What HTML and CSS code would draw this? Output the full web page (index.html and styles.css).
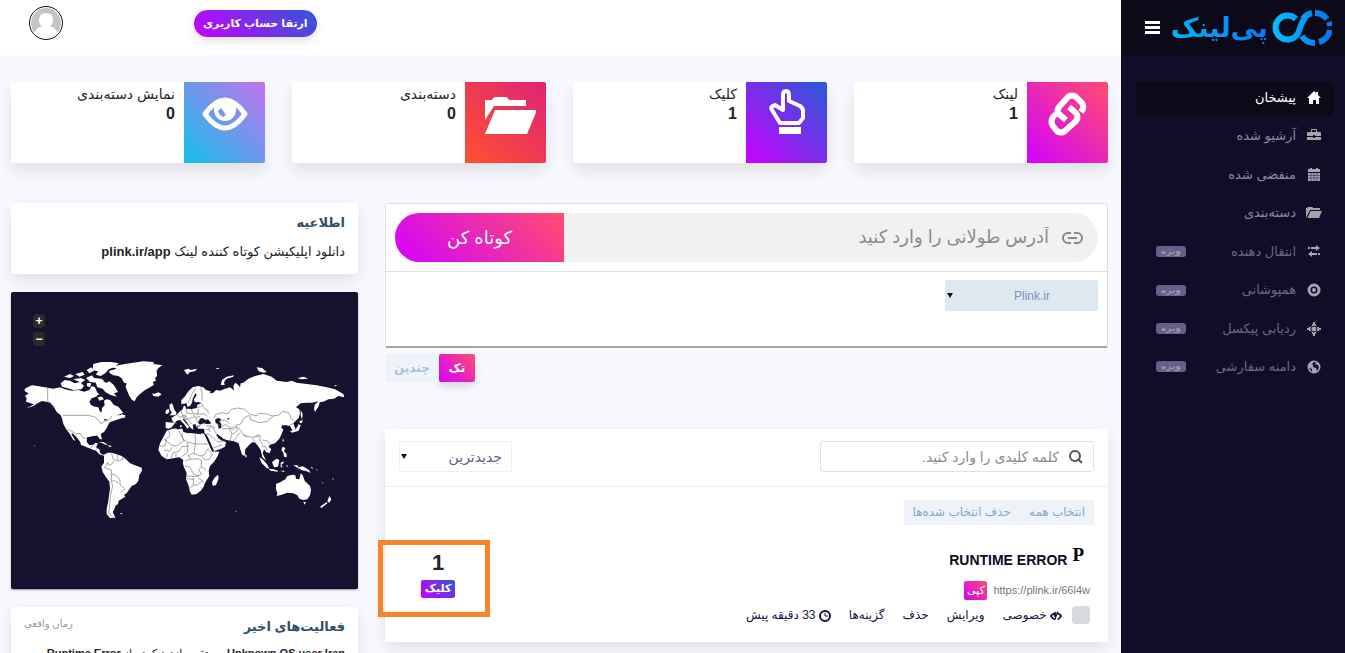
FILE: index.html
```
<!DOCTYPE html>
<html lang="fa" dir="rtl">
<head>
    <meta charset="UTF-8">
    <meta name="viewport" content="width=device-width, initial-scale=1.0">
    <title>پی‌لینک - پیشخان</title>
    <link rel="stylesheet" href="styles.css">
</head>
<body>
    <aside class="sidebar">
        <div class="brand">
            <a href="#" class="logo">
                <svg class="logo-mark" viewBox="0 0 60 36" aria-hidden="true">
                    <defs>
                        <linearGradient id="ring" x1="0" x2="60" y1="0" y2="0" gradientUnits="userSpaceOnUse">
                            <stop offset="0" stop-color="#00c3fb"/>
                            <stop offset="1" stop-color="#0a72ee"/>
                        </linearGradient>
                    </defs>
                    <g fill="none" stroke="url(#ring)" stroke-width="6">
                        <path d="M31 9A15 15 0 0 1 40 3M43 3A15 15 0 0 1 55 9M57 12A15 15 0 0 1 58 16M58 20A15 15 0 0 1 47 32M43 33A15 15 0 0 1 30 26"/>
                        <path d="M24 9A12 12 0 1 0 25 25Q27 22 28 18T33 8"/>
                    </g>
                </svg>
                <span class="logo-text">پی‌لینک</span>
            </a>
            <button class="menu-btn" aria-label="منو">
                <svg viewBox="0 0 15 13"><path d="M0 0h15v3H0zM0 5h15v3H0zM0 10h15v3H0z"/></svg>
            </button>
        </div>
        <ul class="menu">
            <li><a href="#" class="active">
                <svg viewBox="0 0 16 16"><path d="M8 1 1 8h2v6h4v-4h3v4h3V8h2L12 5V2h-2v1z"/></svg>
                <span>پیشخان</span></a></li>
            <li><a href="#">
                <svg viewBox="0 0 16 16"><path d="M5 4V2q0-1 1-1h4q1 0 1 1v2h3q1 0 1 1v3H9V7H7v1H1V5q0-1 1-1zM6 4h4V2H6zM1 9h6v1h2V9h6v3H1z"/></svg>
                <span>آرشیو شده</span></a></li>
            <li><a href="#">
                <svg viewBox="0 0 16 16"><path d="M2 2h2V1h2v1h4V1h2v1h2v3H2zM2 6h12v8H2z"/><path class="cut" d="M2 8.500h12M2 11h12M5 6v8M8 6v8M11 6v8"/></svg>
                <span>منفضی شده</span></a></li>
            <li><a href="#">
                <svg viewBox="0 0 16 16"><path d="M0 13V3h1q0-1 1-1h4q1 0 1 1h7v2H4zM4.500 6H16l-3 7H1.500z"/></svg>
                <span>دسته‌بندی</span></a></li>
            <li class="dim"><a href="#">
                <svg viewBox="0 0 16 16"><path d="M2 3h2v2H2zM5 3h5V1l4 3-4 3V5H5zM12 9h2v2h-2zM6 9h5v2H6v2L2 10l4-3z"/></svg>
                <span>انتقال دهنده</span><b>ویژه</b></a></li>
            <li class="dim"><a href="#">
                <svg viewBox="0 0 16 16"><circle cx="8" cy="8" r="5" class="line"/><circle cx="8" cy="8" r="2"/></svg>
                <span>همپوشانی</span><b>ویژه</b></a></li>
            <li class="dim"><a href="#">
                <svg viewBox="0 0 16 16"><path d="M7 1h2v2h1v2h1v1h2v1h2v2h-2v1h-2v1h-1v2H9v2H7v-2H6v-2H5v-1H3V9H1V7h2V6h2V5h1V3h1z"/><circle cx="8" cy="8" r="3" class="ring"/></svg>
                <span>ردیابی پیکسل</span><b>ویژه</b></a></li>
            <li class="dim"><a href="#">
                <svg viewBox="0 0 16 16"><circle cx="8" cy="8" r="6.500"/><path class="hole" d="M8 3l2 0-1 2 3 1 1 3-2 3-1-3-3-1V6L6 5zM3 9l3 1v3z"/></svg>
                <span>دامنه سفارشی</span><b>ویژه</b></a></li>
        </ul>
    </aside>

    <div class="page">
        <header class="topbar">
            <a href="#" class="upgrade">ارتقا حساب کاربری</a>
            <a href="#" class="avatar" aria-label="حساب کاربری">
                <svg viewBox="0 0 30 30">
                    <clipPath id="face"><circle cx="15" cy="15" r="15"/></clipPath>
                    <g clip-path="url(#face)">
                        <path fill="#c5c5c5" d="M0 0h30v30H0z"/>
                        <path fill="#fff" d="M15 5q7 0 7 7 0 4-3 6 6 2 8 8v5H3v-5q2-6 8-8-3-2-3-6 0-7 7-7z"/>
                    </g>
                </svg>
            </a>
        </header>

        <main class="content">
            <section class="stats">
                <div class="stat">
                    <div class="tile pink">
                        <svg viewBox="0 0 60 60"><g fill="none" stroke="#fff" stroke-width="6">
                            <path d="M43 30q4-5 1-9l-6-6q-4-3-8 0L21 25q-3 4 0 7l7 6"/>
                            <path d="M31 25l7 6q3 4 0 8l-11 10q-4 3-8 0l-4-5q-3-4 0-9l3-3"/>
                        </g></svg>
                    </div>
                    <div class="stat-text"><p>لینک</p><strong>1</strong></div>
                </div>
                <div class="stat">
                    <div class="tile violet">
                        <svg viewBox="0 0 60 60">
                            <path fill="none" stroke="#fff" stroke-width="4" stroke-linejoin="round" d="M26 28V13q0-4 3-4t3 4v6l11 5q3 2 3 5v7l-4 5H23l-8-13q-2-3 1-4l2-1z"/>
                            <path fill="#fff" d="M22 45h22v7H22z"/>
                        </svg>
                    </div>
                    <div class="stat-text"><p>کلیک</p><strong>1</strong></div>
                </div>
                <div class="stat">
                    <div class="tile red">
                        <svg viewBox="0 0 60 60"><path fill="#fff" d="M9 38V18h7q1-3 4-3h9q3 0 4 3h17v6H18zM19 28h42L51 52H9z"/></svg>
                    </div>
                    <div class="stat-text"><p>دسته‌بندی</p><strong>0</strong></div>
                </div>
                <div class="stat">
                    <div class="tile blue">
                        <svg viewBox="0 0 60 60">
                            <path fill="none" stroke="#fff" stroke-width="5" stroke-linejoin="round" d="M10 32Q20 18 30 18t20 14Q40 46 30 46T10 32z"/>
                            <circle cx="30" cy="28" r="11" fill="#fff"/>
                            <path fill="#7599ec" d="M23 29l3-3 5 7-3 2q-4-2-5-6z"/>
                        </svg>
                    </div>
                    <div class="stat-text"><p>نمایش دسته‌بندی</p><strong>0</strong></div>
                </div>
            </section>

            <div class="columns">
                <div class="main-col">
                    <form class="shorten">
                        <div class="url-row">
                            <label class="url-field">
                                <svg viewBox="0 0 23 14" fill="none" stroke="#888" stroke-width="2"><path d="M10 2H7a5 5 0 0 0 0 10h3M13 2h3a5 5 0 0 1 0 10h-3M7 7h9"/></svg>
                                <input type="text" placeholder="آدرس طولانی را وارد کنید" aria-label="آدرس طولانی">
                            </label>
                            <button type="button" class="short-btn">کوتاه کن</button>
                        </div>
                        <div class="domain-row">
                            <span class="pick domain">
                                <select aria-label="دامنه"><option>Plink.ir</option></select>
                            </span>
                        </div>
                    </form>
                    <div class="mode">
                        <button class="on">تک</button>
                        <button>چندین</button>
                    </div>

                    <section class="links">
                        <div class="links-head">
                            <label class="search">
                                <svg viewBox="0 0 14 14" fill="none" stroke="#555" stroke-width="2"><circle cx="6" cy="6" r="5"/><path d="M9 9l4 4"/></svg>
                                <input type="text" placeholder="کلمه کلیدی را وارد کنید." aria-label="جستجو">
                            </label>
                            <span class="pick order">
                                <select aria-label="ترتیب"><option>جدیدترین</option></select>
                            </span>
                        </div>
                        <div class="bulk">
                            <a href="#">انتخاب همه</a>
                            <a href="#">حذف انتخاب شده‌ها</a>
                        </div>
                        <div class="link-item">
                            <div class="link-info">
                                <h3><span class="fav">P</span><a href="#">RUNTIME ERROR</a></h3>
                                <div class="short-url">
                                    <a href="#">https://plink.ir/66l4w</a>
                                    <button class="copy">کپی</button>
                                </div>
                                <div class="actions">
                                    <input type="checkbox" aria-label="انتخاب لینک">
                                    <a href="#">
                                        <svg viewBox="0 0 14 12"><path d="M7 2Q3 3 1 6q2 3 5 4M9 3q3 1 4 3-2 3-4 4" fill="none" stroke="#1a1440" stroke-width="2"/><path d="M8 1h2L6 11H5zM7 3v5Q3 6 5 3z" fill="#1a1440"/></svg>
                                        خصوصی</a>
                                    <a href="#">ویرایش</a>
                                    <a href="#">حذف</a>
                                    <a href="#">گزینه‌ها</a>
                                    <span>
                                        <svg viewBox="0 0 12 12" fill="none" stroke="#1a1440" stroke-width="2"><circle cx="6" cy="6" r="5"/><path d="M6 3v3h3" stroke-width="1"/></svg>
                                        33 دقیقه پیش</span>
                                </div>
                            </div>
                            <div class="clicks">
                                <strong>1</strong>
                                <span>کلیک</span>
                            </div>
                        </div>
                    </section>
                </div>

                <div class="side-col">
                    <section class="card notice">
                        <h2>اطلاعیه</h2>
                        <p>دانلود اپلیکیشن کوتاه کننده لینک <b>plink.ir/app</b></p>
                    </section>

                    <section class="map">
                        <div class="zoom">
                            <button aria-label="بزرگ‌نمایی">+</button>
                            <button aria-label="کوچک‌نمایی">−</button>
                        </div>
                        <svg viewBox="3 -174 1041 891" role="img" aria-label="نقشه جهان">
                            <g class="land">
                                <!-- north america -->
                                <path d="M43 118L55 110 66 106 82 108 113 113 130 116 150 112 165 118 185 122 205 120 222 125 238 120 245 108 255 112 262 128 268 132 258 140 245 145 238 155 243 165 255 170 265 172 270 185 275 186 276 174 284 166 282 152 290 148 300 150 312 165 325 170 340 188 330 193 318 196 335 195 347 200 340 203 325 208 312 212 300 216 296 222 292 230 288 238 282 246 272 252 276 268 270 268 262 257 250 258 240 260 231 262 230 275 238 286 250 284 257 278 264 280 258 292 268 298 270 308 278 314 286 312 280 317 268 313 258 302 245 298 230 292 213 284 210 275 200 262 188 250 184 252 196 272 190 270 178 250 170 240 160 222 156 205 152 196 140 186 130 168 120 158 112 156 96 153 85 158 70 168 50 175 72 163 62 160 48 155 50 145 45 138 56 130 46 125z"/>
                                <!-- arctic islands -->
                                <path d="M152 100l12-10 16 2 14 8 16-4 12 12-8 10-24 2-20-6-14-4zM162 80l18-8 12 6-12 6zM196 72l22-6 6 8-16 6zM190 88l22-4 14 6-12 8zM230 60l14-8 8 10-14 8zM228 84l18-8 6 8 22 2 10 8-24 4-20-2zM250 42l24-6 30 0 22 4-10 10-20 8-10 12-14 8-14-4 6-10-16-4zM256 96l20-2 14 4 8-4 14 12 12 20-12 4 8 10-20-6-14-8-8-10-16-4zM262 140l14 0 6 8-14 4zM232 98l12 2-4 12-10-4z"/>
                                <!-- greenland, iceland -->
                                <path d="M298 62L320 56 308 52 325 46 345 42 370 38 400 34 430 36 432 42 457 46 445 54 440 62 441 78 435 84 438 92 428 96 432 104 420 112 405 120 390 132 380 142 374 154 366 150 358 138 352 124 347 110 350 100 342 98 335 85 325 78 310 76 298 68zM426 130l6 2 13-5 10 6-10 7-15-2z"/>
                                <!-- caribbean -->
                                <path d="M266 276l14 0 14 8-8 0-10-5zM292 286l14 2-6 4zM72 286l3 0-1 3zM330 490l8-1-4 4zM334 192l12 4-2 8-8-2z"/>
                                <!-- south america -->
                                <path d="M282 316L292 308 305 308 320 313 335 318 348 328 360 340 375 346 395 353 396 362 388 374 385 392 378 402 365 408 358 418 350 430 342 434 346 440 335 447 326 452 324 462 316 468 313 478 308 486 312 494 316 503 300 504 290 492 290 476 294 458 297 438 300 415 298 395 288 382 278 366 274 350 282 338z"/>
                                <!-- africa -->
                                <path d="M470 242L488 236 516 234 520 246 535 250 552 246 575 250 583 252 590 268 600 290 606 304 628 305 622 320 612 335 600 348 596 362 598 378 590 390 585 400 580 412 572 422 560 432 545 434 540 425 535 405 528 388 530 370 522 352 518 338 520 330 508 322 490 325 470 328 455 318 445 300 450 280 460 262zM624 374l2 11-8 20-10 3-2-13 9-13z"/>
                                <!-- europe and asia -->
                                <path d="M467 216L490 218 484 204 500 194 510 184 518 178 521 168 526 168 528 176 545 177 560 174 562 164 575 159 566 156 554 157 552 148 560 135 556 130 548 146 546 158 540 168 532 170 530 160 514 163 514 150 524 140 535 124 548 112 565 108 580 112 588 120 602 124 600 130 592 132 610 128 618 120 630 122 645 116 660 112 668 118 672 122 670 108 676 98 684 104 690 112 692 100 700 98 715 86 735 78 760 72 785 80 800 92 830 96 845 92 860 98 890 102 920 106 950 112 975 118 1000 132 1003 142 985 138 972 146 955 148 940 155 930 156 925 170 915 186 912 178 914 165 925 154 905 158 890 158 872 160 858 172 868 178 870 190 866 204 856 214 850 220 856 236 848 242 840 228 828 226 816 226 814 234 820 238 816 250 808 266 795 280 780 284 776 290 784 298 778 310 768 306 762 298 758 310 768 332 757 322 752 300 744 288 736 278 728 276 718 284 706 298 704 318 696 314 690 295 686 280 672 274 650 270 640 266 622 254 624 264 636 272 648 276 645 290 630 298 610 304 600 285 592 262 584 250 582 236 565 236 558 228 556 222 548 224 550 240 540 232 530 216 522 206 518 208 530 222 538 230 532 236 522 222 510 210 500 212 494 220 486 232 476 236 467 234z"/>
                                <path d="M478 164l8-4 4 8 2 10 8 10-4 8-18 0 8-8-6-8zM468 180l8-4 2 10-6 6-6-2zM510 226l5 0 0 8-5-2z"/>
                                <!-- northern islands -->
                                <path d="M522 60l14-4 6 4 20-4-8 8-14 2-8 8-6-8zM616 54l12 0-4 4zM632 104l4-14 14-10 22-4-2 4-20 6-8 10 2 10zM740 52l16 2 14 12-10 2-14-4zM862 84l20-4 12 6-20 2zM974 105l8 2-8 2z"/>
                                <!-- japan, philippines, indonesia -->
                                <path d="M872 180l6 12-2 18-4-14zM868 214l10-4-2 8-6 2zM866 222l6 4-6 16-20 6-6-4 16-6 6-8zM818 266l4 4-4 8zM818 290l8 4-4 10 8 8 0 10-8-2-2-12-6-8zM748 322l10 6 14 16 6 12-8-2-16-16zM776 356l14 2 14 4-2 3-20-3zM786 336l14-10 8 4-4 20-12 2zM812 338l10-4-2 6-6 4 4 8-6 0zM830 344l4 4-4 4zM810 362l14 0-2 4zM850 346l12 0 4 6 12-3 18 10 6 10-14-6-12-2-14-8zM705 312l6 6-4 6z"/>
                                <!-- oceania -->
                                <path d="M798 402L812 396 826 388 832 378 848 374 856 376 858 386 868 388 872 370 878 376 884 392 900 408 903 420 900 436 892 448 880 450 868 446 862 436 850 430 832 428 815 434 800 438 802 430 798 418zM880 456l8 0-4 8zM958 438l6 10-6 10-6-4zM950 456l2 4-18 14-4-4zM902 350l8 4-4 2zM935 396l6 4-4 0zM967 385l5 2-4 2zM918 356l6 6-5-2zM676 482l4 2-4 1z"/>
                            </g>
                            <g class="water">
                                <path d="M564 218l6-12 8-2 8 6 8-2 10 12-10 3-14-3-10 4zM616 208l10-4 8 4-6 6 6 8 0 12-8 2-2-12-8-8zM260 134l10 4-4 5zM560 228l14-2-12 5zM282 206l12 4-10 2zM650 206l8-2-2 5z"/>
                                <path class="sea" d="M586 252l8 16 8 18 8 18M500 236l20-4 14 14 40 4M620 254l16 12"/>
                            </g>
                            <g class="borders">
                                <path d="M113 112v43l8 3 10 15M158 196h78l18 5 12 10 6 10 14-8 12-4 8-12M170 240l12 2 16 10 12-2 8 12 12 4M240 296l8-10M256 300l8-6"/>
                                <path d="M305 310l4 16 16 8 14-8M288 338l14 8 10-14M282 352l10 4 12 4 0 12 14 4 12 14 0 14 14 12-12 12M304 372l0 22 10-2 12 8M304 394l4 14-6 26-4 40-2 16 14 12M322 314l2 16M338 320l0 10M286 350l10-12"/>
                                <path d="M476 242l4 16-18 12M462 268l22 18 16 2 22-16-16-30M450 288l14 0 6-20M462 300l16 4 8-12M470 326l2-16M484 324l4-16 18-4M498 322l0-12M506 304l10-14 20-2M515 248l4 20 14 10 0 28-18 14M534 276l22 6v-34M556 282l38 0M556 282l-4 28-18 6M552 310l18 8 14-4 10-18M594 298l14 14-10 16-14 2-10-12M534 316l8 12-16 4M542 328l20-2 12 4 0 20-8 10 8 12M524 348l16 4 12 22 16 2M574 350l14 10M530 378l26 2 12-2 8-8M530 386l20 2M550 384v22l-14 10M550 404l12 2 14-14 8 8M564 384l14 8M572 412l6 4"/>
                                <path d="M484 216l16 5M500 194l10 8 12-6M513 180l4 16 14 4M528 176l2 12 16 4M544 177l4 12 14 4 4-16M560 174l14-6M532 192l-14 10 20 4 14-6M548 190l8 12 14-2M556 202l8 16M575 160l8 16 10 4 2 12M562 192l22 0 8 8M534 160l8-20 14-26M572 112l4 20 0 20M522 206l14 4 10 12M588 228l18 0 10 6M586 240l12-4 6-8M596 236l4 10M606 230l8 12 6 12M590 250l12 6 20 20M622 276l22-4M610 294l16-6 12-4"/>
                                <path d="M612 204l4-10 20-6 18 4 10-14 18-4 22 4 14 14 20 6 10-8 22 2 16 6 20-2 12-12 18 4 8 18 8 8M716 196l-16 10-8 16-16 4M616 218l18 10 12-4 16 10 14-4 8 12M626 214l18-4 14 10M718 196l4 14 28 8 22-4 18-16M636 236l22 0 8 16-6 18M658 236l16 2M666 254l16-12M676 228l14 10 10 16 16 6 14 2 16-8M672 272l10-14 8-10M700 254l12 8M726 264l10 12M736 262l14-6 0 14 8 14M758 270l16 4 8 12M756 288l10 2 6 12M866 346v16M838 226l12-6"/>
                            </g>
                        </svg>
                    </section>

                    <section class="card activity">
                        <div class="activity-head">
                            <h2>فعالیت‌های اخیر</h2>
                            <small>زمان واقعی</small>
                        </div>
                        <p><b>Unknown OS user Iran</b> مستقیم بازدید کرده از <b>Runtime Error</b></p>
                    </section>
                </div>
            </div>
        </main>
    </div>
</body>
</html>
```
FILE: styles.css
```
* {
    box-sizing: border-box;
}
body {
    display: flex;
    height: 100vh;
    margin: 0;
    overflow: hidden;
    background-color: #f8f9fe;
    color: #212529;
    font-family: "Liberation Sans", "DejaVu Sans", sans-serif;
    font-size: 13px;
    line-height: 20px;
}
h2, h3, p, ul {
    margin: 0;
    padding: 0;
}
a {
    color: inherit;
    text-decoration: none;
}
button, input, select {
    font-family: inherit;
    border: none;
    padding: 0;
}
button {
    cursor: pointer;
}

/* sidebar */
.sidebar {
    flex: none;
    width: 224px;
    background-color: #110c28;
    color: #8c87a0;
}
.brand {
    display: flex;
    align-items: center;
    justify-content: space-between;
    height: 55px;
    padding: 0 13px 0 24px;
    background-color: #0c0919;
}
.logo {
    display: flex;
    align-items: center;
    gap: 4px;
}
.logo-mark {
    width: 60px;
    height: 36px;
}
.logo-text {
    font-size: 27px;
    font-weight: bold;
    line-height: 44px;
    background: linear-gradient(to left, #0878f8, #00b8fb);
    background-clip: text;
    -webkit-background-clip: text;
    color: transparent;
}
.menu-btn {
    background: none;
    width: 15px;
    height: 13px;
}
.menu-btn svg {
    display: block;
    fill: #fff;
}
.menu {
    display: flex;
    flex-direction: column;
    justify-content: space-between;
    height: 303px;
    margin: 27px 12px 0 15px;
    list-style: none;
}
.menu a {
    display: flex;
    align-items: center;
    height: 34px;
    padding: 0 11px 2px 20px;
}
.menu .active {
    background-color: #0c0919;
    color: #fff;
}
.menu svg {
    width: 16px;
    height: 16px;
    margin-left: 10px;
    fill: #a5a3ac;
}
.menu .active svg {
    fill: #fff;
}
.menu .cut {
    stroke: #110c28;
    stroke-width: 1px;
    opacity: 0.5;
}
.menu .hole {
    fill: #110c28;
}
.menu .line {
    fill: none;
    stroke: #a5a3ac;
    stroke-width: 3px;
}
.menu .ring {
    fill: none;
    stroke: #110c28;
    stroke-width: 1px;
}
.menu .dim a {
    color: #6d6785;
}
.menu b {
    width: 30px;
    height: 11px;
    margin-right: auto;
    border-radius: 3px;
    background-color: #665f8a;
    color: #9a97a8;
    font-size: 9px;
    line-height: 10px;
    text-align: center;
}

/* top bar */
.page {
    flex: 1;
    min-width: 0;
}
.topbar {
    display: flex;
    align-items: center;
    justify-content: flex-end;
    gap: 131px;
    height: 55px;
    padding: 0 29px 9px;
    background-color: #fff;
}
.upgrade {
    padding: 3px 9px 4px;
    border-radius: 14px;
    background: linear-gradient(45deg, #c800ff, #3058d6);
    box-shadow: 0 4px 8px rgba(0, 0, 0, 0.12);
    color: #fff;
    font-size: 11px;
    font-weight: bold;
}
.avatar {
    width: 34px;
    height: 34px;
    padding: 1px;
    border: 1px solid #110c28;
    border-radius: 50%;
}
.avatar svg {
    display: block;
}

/* stats */
.content {
    padding: 27px 13px 0 11px;
}
.stats {
    display: grid;
    grid-template-columns: repeat(4, 1fr);
    gap: 27px;
}
.stat {
    display: flex;
    height: 81px;
    border-radius: 2px;
    background-color: #fff;
    box-shadow: 0 8px 16px rgba(0, 0, 0, 0.1);
}
.tile {
    display: flex;
    justify-content: center;
    width: 81px;
    border-radius: 0 2px 2px 0;
}
.tile svg {
    width: 60px;
    height: 60px;
}
.pink {
    background: linear-gradient(45deg, #d300ff, #ff4e6e);
}
.violet {
    background: linear-gradient(45deg, #cb00ff, #285bd5);
}
.red {
    background: linear-gradient(45deg, #ff512f, #dd2476);
}
.blue {
    background: linear-gradient(45deg, #12c2e9, #c471ed);
}
.stat-text {
    padding: 2px 9px;
}
.stat-text p {
    font-size: 14px;
}
.stat-text strong {
    font-size: 16px;
}

/* columns */
.columns {
    display: grid;
    grid-template-columns: 25fr 12fr;
    gap: 27px;
    margin-top: 40px;
}
.shorten {
    height: 145px;
    border: 1px solid #dcdfe4;
    border-bottom: 2px solid #a3a3a8;
    border-radius: 2px;
    background-color: #fff;
}
.url-row {
    display: flex;
    padding: 9px;
    border-bottom: 1px solid #dfe0e2;
}
.url-field {
    display: flex;
    flex: 1;
    align-items: center;
    gap: 12px;
    height: 49px;
    padding-right: 14px;
    border-radius: 0 25px 25px 0;
    background-color: #f1f1f1;
}
.url-field svg {
    width: 23px;
    height: 14px;
}
.url-field input {
    flex: 1;
    background: none;
    font-size: 18px;
}
input::placeholder {
    color: #8b8b8b;
    opacity: 1;
}
.short-btn {
    width: 169px;
    border-radius: 25px 0 0 25px;
    background: linear-gradient(45deg, #d300ff, #ff4e6e);
    color: #fff;
    font-size: 18px;
}
.domain-row {
    padding: 8px 9px;
}
.pick {
    position: relative;
    display: inline-block;
}
.pick::after {
    content: "";
    position: absolute;
    top: 13px;
    left: 2px;
    border: 3px solid transparent;
    border-top: 5px solid #111;
    border-bottom: none;
}
.pick select {
    appearance: none;
    width: 100%;
    height: 31px;
    border-radius: 2px;
}
.domain {
    width: 153px;
}
.domain select {
    padding-right: 48px;
    background-color: #dee8f1;
    color: #7a94bd;
    font-size: 12px;
}
.mode {
    display: flex;
    justify-content: flex-end;
    margin-top: 6px;
}
.mode button {
    height: 28px;
    padding: 0 9px;
    background-color: #edf3f8;
    color: #a9c2d6;
    font-size: 12px;
    font-weight: bold;
}
.mode .on {
    width: 36px;
    border-radius: 2px;
    background: linear-gradient(45deg, #d300ff, #ff4e6e);
    box-shadow: 0 4px 8px rgba(0, 0, 0, 0.15);
    color: #fff;
}

/* links list */
.links {
    margin-top: 47px;
    padding-bottom: 17px;
    border-radius: 2px;
    background-color: #fff;
    box-shadow: 0 6px 16px rgba(0, 0, 0, 0.1);
}
.links-head {
    display: flex;
    justify-content: space-between;
    padding: 12px 14px 14px;
    border-bottom: 1px solid #eceef2;
}
.search {
    display: flex;
    align-items: center;
    gap: 10px;
    width: 274px;
    height: 31px;
    padding: 0 10px;
    border: 1px solid #dce4e6;
    border-radius: 3px;
}
.search svg {
    width: 14px;
    height: 14px;
}
.search input {
    flex: 1;
    min-width: 0;
    font-size: 14px;
}
.order {
    width: 113px;
}
.order select {
    padding-right: 9px;
    border: 1px solid #edf0f4;
    background-color: #fff;
    color: #54618a;
    font-size: 14px;
}
.bulk {
    display: flex;
    gap: 18px;
    width: fit-content;
    margin: 13px 14px 0;
    padding: 2px 9px 3px;
    background-color: #edf3f8;
    color: #86a8c5;
    font-size: 12px;
}
.link-item {
    display: flex;
    justify-content: space-between;
}
.link-info {
    padding: 25px 18px 0;
}
.link-info h3 {
    display: flex;
    gap: 5px;
    padding-right: 6px;
    color: #0f0b25;
    font-size: 14px;
}
.fav {
    margin-top: -5px;
    color: #000;
    font-family: "Liberation Serif", serif;
    font-size: 19px;
}
.short-url {
    display: flex;
    align-items: center;
    gap: 6px;
    margin-top: 10px;
    color: #777;
    font-size: 11px;
}
.copy {
    width: 23px;
    height: 19px;
    border-radius: 2px;
    background: linear-gradient(45deg, #d300ff, #ff4e6e);
    color: #fff;
    font-size: 11px;
}
.actions {
    display: flex;
    align-items: center;
    gap: 18px;
    margin-top: 5px;
    color: #1a1440;
    font-size: 12px;
}
.actions input {
    appearance: none;
    width: 18px;
    height: 18px;
    margin: 0 0 0 -8px;
    border-radius: 4px;
    background-color: #d6dadd;
}
.actions svg {
    width: 12px;
    height: 12px;
    vertical-align: middle;
}
/* orange frame hangs out over the card edge */
.clicks {
    display: flex;
    flex-direction: column;
    align-items: center;
    gap: 7px;
    width: 112px;
    height: 77px;
    margin: 15px 0 0 -7px;
    padding-top: 8px;
    padding-left: 8px;
    border: 5px solid #f88429;
}
.clicks strong {
    font-size: 22px;
}
.clicks span {
    height: 18px;
    padding: 0 4px;
    border-radius: 2px;
    background: linear-gradient(45deg, #c800ff, #3058d6);
    color: #fff;
    font-size: 11px;
    font-weight: bold;
    line-height: 17px;
}

/* left column */
.side-col {
    display: flex;
    flex-direction: column;
    gap: 18px;
}
.card {
    padding: 10px 13px 12px;
    border-radius: 3px;
    background-color: #fff;
    box-shadow: 0 6px 16px rgba(0, 0, 0, 0.1);
}
.card h2 {
    color: #30506c;
    font-size: 13px;
}
.notice p {
    margin-top: 9px;
}
.map {
    position: relative;
    border-radius: 2px;
    background-color: #15112e;
    box-shadow: 0 1px 2px rgba(0, 0, 0, 0.4);
}
.map svg {
    display: block;
}
.zoom {
    position: absolute;
    top: 22px;
    left: 22px;
    display: flex;
    flex-direction: column;
    gap: 4px;
}
.zoom button {
    width: 12px;
    height: 14px;
    border-radius: 3px;
    background-color: #292929;
    color: #fff;
    font-size: 12px;
    font-weight: bold;
    line-height: 12px;
}
.land {
    fill: #fff;
}
.water {
    fill: #15112e;
}
.sea {
    fill: none;
    stroke: #15112e;
    stroke-width: 5px;
}
.borders {
    fill: none;
    stroke: #777584;
    stroke-width: 2px;
}
.activity-head {
    display: flex;
    justify-content: space-between;
}
.activity-head small {
    color: #999;
    font-size: 10px;
    line-height: 14px;
}
.activity p {
    margin-top: 6px;
    font-size: 11px;
}
```
